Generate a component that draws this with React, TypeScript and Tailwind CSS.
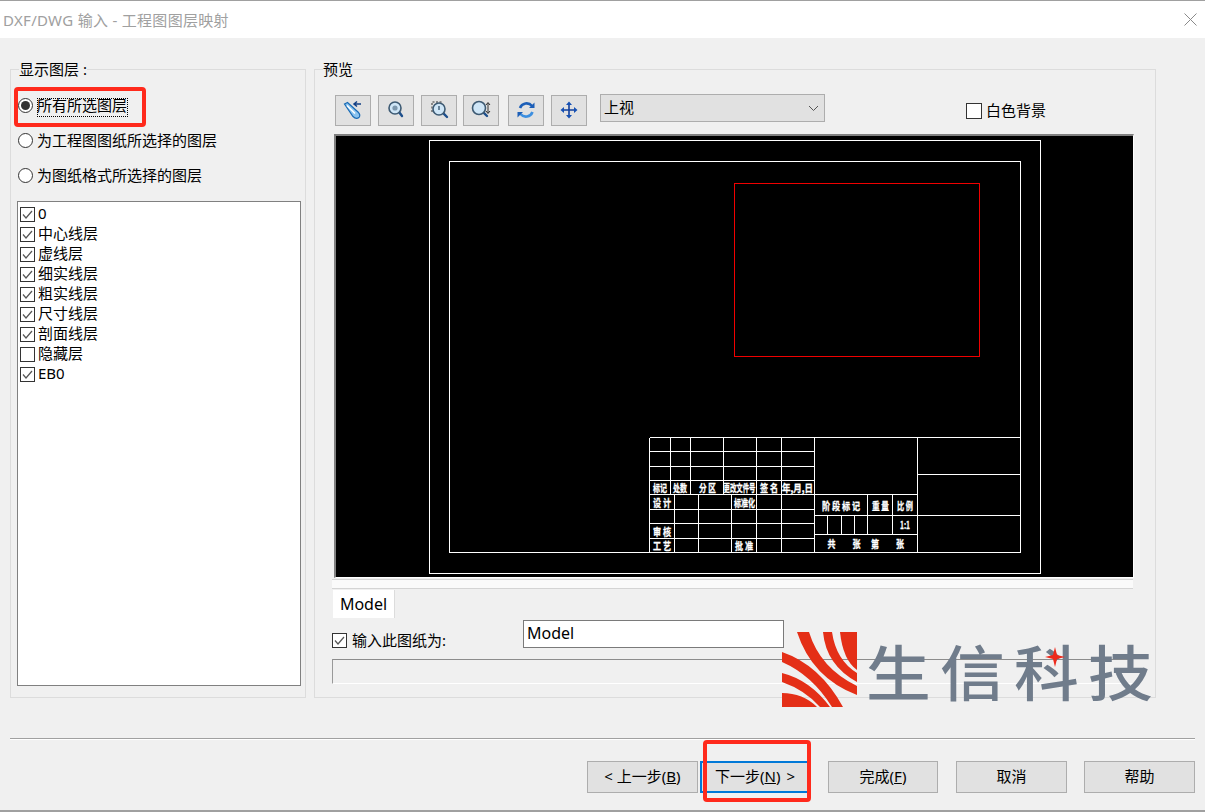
import React from "react";

const LAYERS = [
  { name: "0", on: true },
  { name: "中心线层", on: true },
  { name: "虚线层", on: true },
  { name: "细实线层", on: true },
  { name: "粗实线层", on: true },
  { name: "尺寸线层", on: true },
  { name: "剖面线层", on: true },
  { name: "隐藏层", on: false },
  { name: "EB0", on: true },
];

// [x1, y1, x2, y2] in page coordinates, the drawing's viewBox is set to match
const LINES = [
  [649, 437, 1020, 437],
  [649, 451, 814, 451],
  [649, 466, 814, 466],
  [649, 480, 814, 480],
  [649, 494, 917, 494],
  [649, 509, 814, 509],
  [649, 523, 814, 523],
  [649, 538, 814, 538],
  [814, 515, 1020, 515],
  [814, 534, 917, 534],
  [917, 474, 1020, 474],
  [649, 437, 649, 552],
  [670, 437, 670, 494],
  [690, 437, 690, 494],
  [723, 437, 723, 494],
  [674, 494, 674, 552],
  [698, 494, 698, 552],
  [731, 494, 731, 552],
  [756, 437, 756, 552],
  [781, 437, 781, 552],
  [814, 437, 814, 552],
  [917, 437, 917, 552],
  [867, 494, 867, 534],
  [892, 494, 892, 534],
  [827, 515, 827, 534],
  [841, 515, 841, 534],
  [854, 515, 854, 534],
];

// text, centre x, baseline y, drawn width
const LABELS: [string, number, number, number][] = [
  ["标记", 660, 492, 14],
  ["处数", 680, 492, 14],
  ["分 区", 707.5, 492, 17],
  ["更改文件号", 739.5, 492, 32],
  ["签 名", 769, 492, 18],
  ["年,月,日", 797.5, 492, 31],
  ["设 计", 662, 507, 18],
  ["标准化", 744.5, 507, 21],
  ["审 核", 662, 536, 18],
  ["工 艺", 662, 550, 18],
  ["批 准", 744, 550, 18],
  ["阶 段 标 记", 841, 510, 38],
  ["重 量", 880.5, 510, 17],
  ["比 例", 905, 510, 16],
  ["1:1", 905, 529, 10],
  ["共", 831.5, 548, 8],
  ["张", 856.5, 548, 8],
  ["第", 875, 548, 8],
  ["张", 900, 548, 8],
];

const Check = ({ on = true }: { on?: boolean }) => (
  <span className="flex h-[15px] w-[15px] shrink-0 items-center justify-center border border-[#333] bg-white">
    {on && (
      <svg width="13" height="13" viewBox="0 0 13 13" fill="none">
        <path d="M2 6.5 5 10 11 3" stroke="#555" strokeWidth="1.2" />
      </svg>
    )}
  </span>
);

const Radio = ({ on = false }: { on?: boolean }) => (
  <span className="flex h-[15px] w-[15px] shrink-0 items-center justify-center rounded-full border border-[#333] bg-white">
    {on && <span className="h-[9px] w-[9px] rounded-full bg-[#333]" />}
  </span>
);

const ToolButton = ({ className, children }: { className?: string; children: React.ReactNode }) => (
  <div className={`mt-px h-[31px] w-[36px] border border-[#adadad] bg-[#e1e1e1] ${className ?? ""}`}>
    <svg width="34" height="29" viewBox="1 1 34 29" fill="none">
      {children}
    </svg>
  </div>
);

const Lens = ({ cx, cy, r, x2, y2 }: { cx: number; cy: number; r: number; x2: number; y2: number }) => (
  <>
    <path d={`M${cx + r * 0.7} ${cy + r * 0.7} L${x2} ${y2}`} stroke="#1d4f8c" strokeWidth="2.4" strokeLinecap="round" />
    <circle cx={cx} cy={cy} r={r} fill="#cfe6f7" stroke="#3d5a73" strokeWidth="1.6" />
  </>
);

const FootButton = ({ className, children }: { className: string; children: React.ReactNode }) => (
  <div className={`flex h-8 items-center justify-center bg-[#e1e1e1] pb-[2px] text-[15px] ${className}`}>
    {children}
  </div>
);

const LayerDrawing = () => (
  <svg
    width="797"
    height="441"
    viewBox="336 136 797 441"
    className="block bg-black font-['Noto_Sans_CJK_SC',sans-serif] text-[10px] font-bold"
  >
    <g shapeRendering="crispEdges">
      <rect x="429.5" y="140.5" width="611" height="433" fill="none" stroke="#fff" />
      <rect x="449.5" y="161.5" width="571" height="391" fill="none" stroke="#fff" />
      <rect x="734.5" y="183.5" width="245" height="173" fill="none" stroke="#f00000" />
      {LINES.map(([x1, y1, x2, y2], i) => (
        <line key={i} x1={x1 + 0.5} y1={y1 + 0.5} x2={x2 + 0.5} y2={y2 + 0.5} stroke="#fff" />
      ))}
    </g>
    {LABELS.map(([t, x, y, w], i) => (
      <text
        key={i}
        x={x}
        y={y}
        textAnchor="middle"
        fill="#fff"
        stroke="#fff"
        strokeWidth="0.3"
        textLength={w}
        lengthAdjust="spacingAndGlyphs"
      >
        {t}
      </text>
    ))}
  </svg>
);

export default function App() {
  return (
    <div className="relative h-[812px] w-[1205px] overflow-hidden bg-[#f0f0f0] font-['Noto_Sans','Noto_Sans_CJK_SC',sans-serif] text-[15px] leading-5 text-black">
      {/* title bar */}
      <div className="flex h-[38px] items-center justify-between border-t border-[#a0a0a0] bg-white pl-[3px] pr-[8px]">
        <span className="text-[15px] tracking-[0.3px] text-[#a0a0a0]">DXF/DWG 输入 - 工程图图层映射</span>
        <svg width="13" height="13" viewBox="0 0 13 13" stroke="#8a8a8a" strokeWidth="1">
          <path d="M0.5 0.5 12.5 12.5M12.5 0.5 0.5 12.5" />
        </svg>
      </div>

      <div className="flex gap-2 pl-[10px] pt-[31px]">
        {/* left group */}
        <div className="h-[629px] w-[296px] border border-[#dcdcdc]">
          <div className="-mt-[11px] ml-2 h-5 w-fit bg-[#f0f0f0]">显示图层 :</div>
          <div className="mt-[9px] flex h-[35px] items-center gap-1 pl-[7px]">
            <Radio on />
            <span className="pb-[2px]">所有所选图层</span>
          </div>
          <div className="flex h-[35px] items-center gap-1 pl-[7px]">
            <Radio />
            <span className="pb-px">为工程图图纸所选择的图层</span>
          </div>
          <div className="flex h-[35px] items-center gap-1 pl-[7px]">
            <Radio />
            <span className="pb-px">为图纸格式所选择的图层</span>
          </div>
          <div className="ml-[6px] mt-2 h-[485px] w-[284px] border border-[#808080] bg-white pl-[2px] pt-[2px]">
            {LAYERS.map((l) => (
              <div key={l.name} className="flex h-5 items-center gap-[3px]">
                <Check on={l.on} />
                <span className="pb-[2px]">{l.name}</span>
              </div>
            ))}
          </div>
        </div>

        {/* right group */}
        <div className="h-[629px] w-[842px] border border-[#dcdcdc]">
          <div className="-mt-[11px] ml-2 h-5 w-fit bg-[#f0f0f0]">预览</div>
          <div className="mt-[15px] flex items-start pl-5">
            <ToolButton>
              <path d="M9.500 9 12.500 7.500 23 17Q26 20 24 22.500Q21 24.500 18 21.500Z" fill="#8cc4ef" stroke="#1a6bb5" strokeWidth="1.2" />
              <path d="M12 10.500 20 18.500" stroke="#fff" strokeWidth="1.6" />
              <path d="M26 9H20M22 6.500 19 9 22 11.500" stroke="#123f85" strokeWidth="1.5" />
            </ToolButton>
            <ToolButton className="ml-[7px]">
              <Lens cx={17} cy={13} r={6} x2={24} y2={21} />
              <circle cx={17} cy={13} r={2.6} fill="#7c97ad" />
            </ToolButton>
            <ToolButton className="ml-[7px]">
              <path d="M11 17V7H21" stroke="#333" strokeDasharray="2 1.5" />
              <Lens cx={18} cy={14} r={6} x2={26} y2={22} />
              <path d="M18 11V15" stroke="#3d5a73" strokeWidth="1.4" />
            </ToolButton>
            <ToolButton className="ml-[6px]">
              <Lens cx={16} cy={13} r={6.5} x2={24} y2={21} />
              <path d="M25 8V18M23 10 25 7.500 27 10M23 16 25 18.500 27 16" stroke="#333" />
            </ToolButton>
            <ToolButton className="ml-[9px]">
              <path d="M12 13A7 7 0 0 1 24 11" stroke="#1c5fb8" strokeWidth="2.6" />
              <path d="M21 13H26.500V7.500Z" fill="#1c5fb8" />
              <path d="M24.500 17A7 7 0 0 1 12.500 19" stroke="#3d8fe0" strokeWidth="2.6" />
              <path d="M15 17H9.500V22.500Z" fill="#1c5fb8" />
            </ToolButton>
            <ToolButton className="ml-[7px]">
              <path d="M18 9V21M12 15H24" stroke="#123f9c" strokeWidth="1.6" />
              <path d="M18 6.500 15 10H21ZM18 23.500 15 20H21ZM9.500 15 13 12V18ZM26.500 15 23 12V18Z" fill="#1450b4" />
            </ToolButton>
            <div className="ml-[13px] flex h-7 w-[225px] items-center justify-between border border-[#adadad] bg-[#e1e1e1] pl-[3px] pr-[5px]">
              <span className="pb-[2px]">上视</span>
              <svg width="11" height="7" viewBox="0 0 11 7" fill="none">
                <path d="M1 1 5.500 5.500 10 1" stroke="#555" />
              </svg>
            </div>
            <div className="ml-[141px] mt-[9px] flex h-4 items-center gap-1">
              <span className="h-4 w-4 border border-[#333] bg-white" />
              <span className="pb-[2px]">白色背景</span>
            </div>
          </div>
          <div className="ml-[19px] mt-2 w-fit border-b border-l-2 border-r border-t-2 border-b-white border-l-[#808080] border-r-white border-t-[#808080]">
            <LayerDrawing />
          </div>
          <div className="ml-[17px] mt-px h-[10px] w-[801px] border-y border-[#d4d4d4] bg-[#fafafa]" />
          <div className="ml-[18px] mt-px flex h-7 w-[62px] items-center justify-center border-r border-[#dcdcdc] bg-white text-[16px]">
            Model
          </div>
          <div className="ml-[17px] mt-[2px] flex h-7 items-end">
            <Check />
            <span className="-mb-[2px] ml-[5px] w-[171px]">输入此图纸为:</span>
            <div className="flex h-7 w-[261px] items-center border border-[#7a7a7a] bg-white pb-[3px] pl-[3px] text-[16px]">Model</div>
          </div>
          <div className="ml-[17px] mt-[11px] h-[25px] w-[801px] border-b border-l border-t border-b-white border-l-[#999] border-t-[#8c8c8c]" />
        </div>
      </div>

      {/* footer */}
      <div className="mx-[10px] mt-10 h-[2px] border-b border-t border-b-white border-t-[#a0a0a0]" />
      <div className="mt-[21px] flex justify-end pr-[10px]">
        <FootButton className="w-[111px] border border-[#adadad]">
          &lt; 上一步(<span className="underline">B</span>)
        </FootButton>
        <FootButton className="ml-[2px] w-[110px] border-2 border-[#0078d7]">
          下一步(<span className="underline">N</span>)<span className="ml-[6px]">&gt;</span>
        </FootButton>
        <FootButton className="ml-[18px] w-[110px] border border-[#adadad]">
          完成(<span className="underline">F</span>)
        </FootButton>
        <FootButton className="ml-[18px] w-[111px] border border-[#adadad]">取消</FootButton>
        <FootButton className="ml-[17px] w-[111px] border border-[#adadad]">帮助</FootButton>
      </div>
      <div className="mt-[17px] h-[2px] bg-[#a0a0a0]" />

      {/* annotations laid over the dialog */}
      <div className="absolute left-[37px] top-[98px] h-[19px] w-[91px] border border-dotted border-black" />
      <div className="absolute left-[14px] top-[87px] h-[40px] w-[132px] rounded-[4px] border-4 border-[#ff2a1c]" />
      <div className="absolute left-[703px] top-[740px] h-[62px] w-[108px] rounded-[4px] border-4 border-[#ff2a1c]" />

      {/* watermark */}
      <svg className="absolute left-[782px] top-[632px]" width="75" height="75" viewBox="782 632 75 75" fill="#e42f17">
        <path d="M840 632H857V670Q843 660 840 632Z" />
        <path d="M823 632H832Q836 660 857 673V682Q826 665 823 632Z" />
        <path d="M797 632H809Q820 668 857 686V695Q812 678 797 632Z" />
        <path d="M782 652Q820 665 843 707H832Q812 675 782 662Z" />
        <path d="M782 673Q810 680 830 707H820Q805 690 782 682Z" />
        <path d="M782 693Q803 693 817 707H782Z" />
      </svg>
      <div className="absolute left-[866px] top-[625px] origin-left scale-x-[1.08] whitespace-nowrap font-['Noto_Sans_CJK_SC',sans-serif] text-[60px] font-medium leading-[90px] tracking-[8.5px] text-[#707c8b]">
        生信科技
      </div>
      <svg className="absolute left-[1045px] top-[647px]" width="20" height="20" viewBox="0 0 20 20" fill="#ee2a1c">
        <path d="M10 0 12 8 20 10 12 12 10 20 8 12 0 10 8 8Z" />
      </svg>
    </div>
  );
}
